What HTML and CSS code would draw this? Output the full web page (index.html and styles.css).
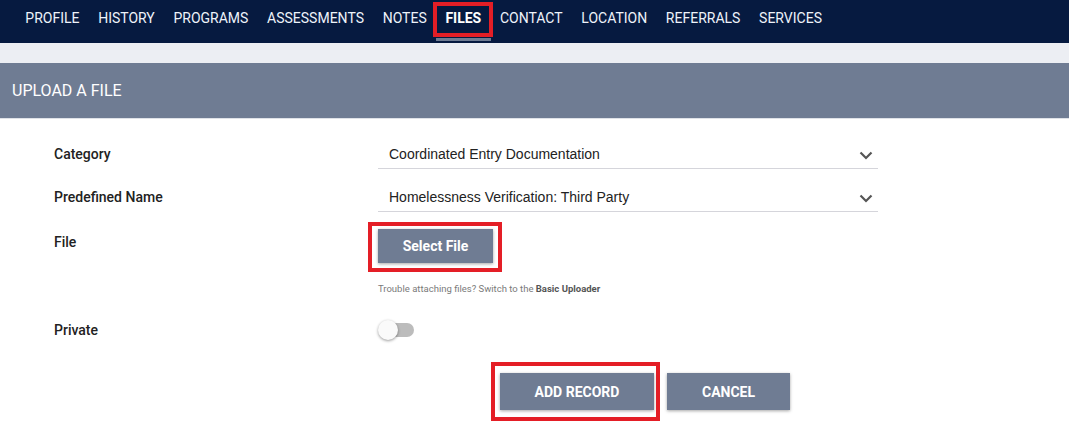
FILE: index.html
```html
<!DOCTYPE html>
<html>
<head>
<meta charset="utf-8">
<link rel="stylesheet" href="styles.css">
</head>
<body>
<nav class="topnav">
  <a class="nav-item">PROFILE</a>
  <a class="nav-item">HISTORY</a>
  <a class="nav-item">PROGRAMS</a>
  <a class="nav-item">ASSESSMENTS</a>
  <a class="nav-item">NOTES</a>
  <a class="nav-item active">FILES</a>
  <a class="nav-item">CONTACT</a>
  <a class="nav-item">LOCATION</a>
  <a class="nav-item">REFERRALS</a>
  <a class="nav-item">SERVICES</a>
</nav>
<div class="band"></div>
<header class="panel-head">UPLOAD A FILE</header>
<main class="form">
  <div class="row">
    <div class="label">Category</div>
    <div class="select">
      <span>Coordinated Entry Documentation</span>
      <svg class="chev" width="14" height="9" viewBox="0 0 14 9"><path d="M1.5 1.5 L7 7 L12.5 1.5" fill="none" stroke="#555" stroke-width="2.2"/></svg>
    </div>
  </div>
  <div class="row row2">
    <div class="label">Predefined Name</div>
    <div class="select">
      <span>Homelessness Verification: Third Party</span>
      <svg class="chev" width="14" height="9" viewBox="0 0 14 9"><path d="M1.5 1.5 L7 7 L12.5 1.5" fill="none" stroke="#555" stroke-width="2.2"/></svg>
    </div>
  </div>
  <div class="row row3">
    <div class="label label-file">File</div>
    <div class="file-col">
      <button class="btn btn-select marked">Select File</button>
      <p class="help">Trouble attaching files? Switch to the <b>Basic Uploader</b></p>
    </div>
  </div>
  <div class="row row4">
    <div class="label label-private">Private</div>
    <div class="toggle"><span class="track"></span><span class="thumb"></span></div>
  </div>
  <div class="actions">
    <button class="btn btn-add marked2">ADD RECORD</button>
    <button class="btn btn-cancel">CANCEL</button>
  </div>
</main>
</body>
</html>
```
FILE: styles.css
```css
* { box-sizing: border-box; }
html, body { margin: 0; padding: 0; background: #fff; }
body { font-family: Roboto, "Liberation Sans", Arial, sans-serif; width: 1069px; height: 427px; overflow: hidden; }

.topnav {
  height: 43px;
  background: #061a40;
  display: flex;
  padding-left: 16px;
}
.nav-item {
  position: relative;
  display: block;
  height: 41px;
  padding: 0 9.35px;
  line-height: 37px;
  font-size: 14px;
  color: #eef3fa;
  border-bottom: 3px solid transparent;
}
.nav-item.active {
  font-weight: 700;
  color: #fff;
  border-bottom-color: #6f7c93;
}
.nav-item.active::after {
  content: "";
  position: absolute;
  left: -3px; right: -2px; top: 2px; bottom: 1px;
  border: 4px solid #e41e26;
}

.band { height: 20px; background: #eceef3; }

.panel-head {
  height: 56px;
  background: #6f7c93;
  color: #fff;
  font-size: 16px;
  line-height: 55px;
  padding-left: 12px;
  border-bottom: 1px solid #dfe2e8;
}

.form { padding: 21px 0 0 54px; }
.row { display: grid; grid-template-columns: 324px 500px; align-items: start; }
.row2 { margin-top: 14px; }
.row3 { margin-top: 17px; }
.row4 { margin-top: 25px; }
.label {
  font-size: 14px;
  font-weight: 500;
  color: #222;
  line-height: 29px;
}
.label-file { line-height: 26px; }
.label-private { line-height: 22px; }

.select {
  height: 29px;
  border-bottom: 1px solid #d5d5db;
  display: flex;
  align-items: center;
  justify-content: space-between;
  padding: 0 5px 0 11px;
  font-family: "Liberation Sans", Arial, sans-serif;
  font-size: 14px;
  color: #222;
}
.chev { margin-top: 3px; }

.btn {
  border: none;
  background: #6f7c93;
  color: #fff;
  font-family: Roboto, "Liberation Sans", sans-serif;
  font-weight: 700;
  font-size: 14px;
  box-shadow: 0 1px 3px rgba(0,0,0,0.35);
  cursor: pointer;
  position: relative;
}
.btn-select { width: 115px; height: 34px; display: block; }
.marked::after {
  content: "";
  position: absolute;
  left: -10px; right: -9px; top: -7px; bottom: -9px;
  border: 4px solid #e41e26;
}
.help {
  margin: 20px 0 0 0;
  font-size: 9.5px;
  color: #7a7a7a;
}
.help b { color: #555; font-weight: 700; }

.toggle { position: relative; width: 36px; height: 22px; }
.track {
  position: absolute;
  left: 2px; top: 4px;
  width: 34px; height: 14px;
  border-radius: 7px;
  background: #bcbcbc;
}
.thumb {
  position: absolute;
  left: 0; top: 1px;
  width: 20px; height: 20px;
  border-radius: 50%;
  background: #fafafa;
  box-shadow: 0 1px 3px rgba(0,0,0,0.4);
}

.actions {
  display: flex;
  gap: 13px;
  margin-top: 32px;
  padding-left: 446px;
}
.btn-add { width: 154px; height: 37px; }
.btn-cancel { width: 123px; height: 37px; }
.marked2::after {
  content: "";
  position: absolute;
  left: -9px; right: -6px; top: -11px; bottom: -11px;
  border: 4px solid #e41e26;
}
```
